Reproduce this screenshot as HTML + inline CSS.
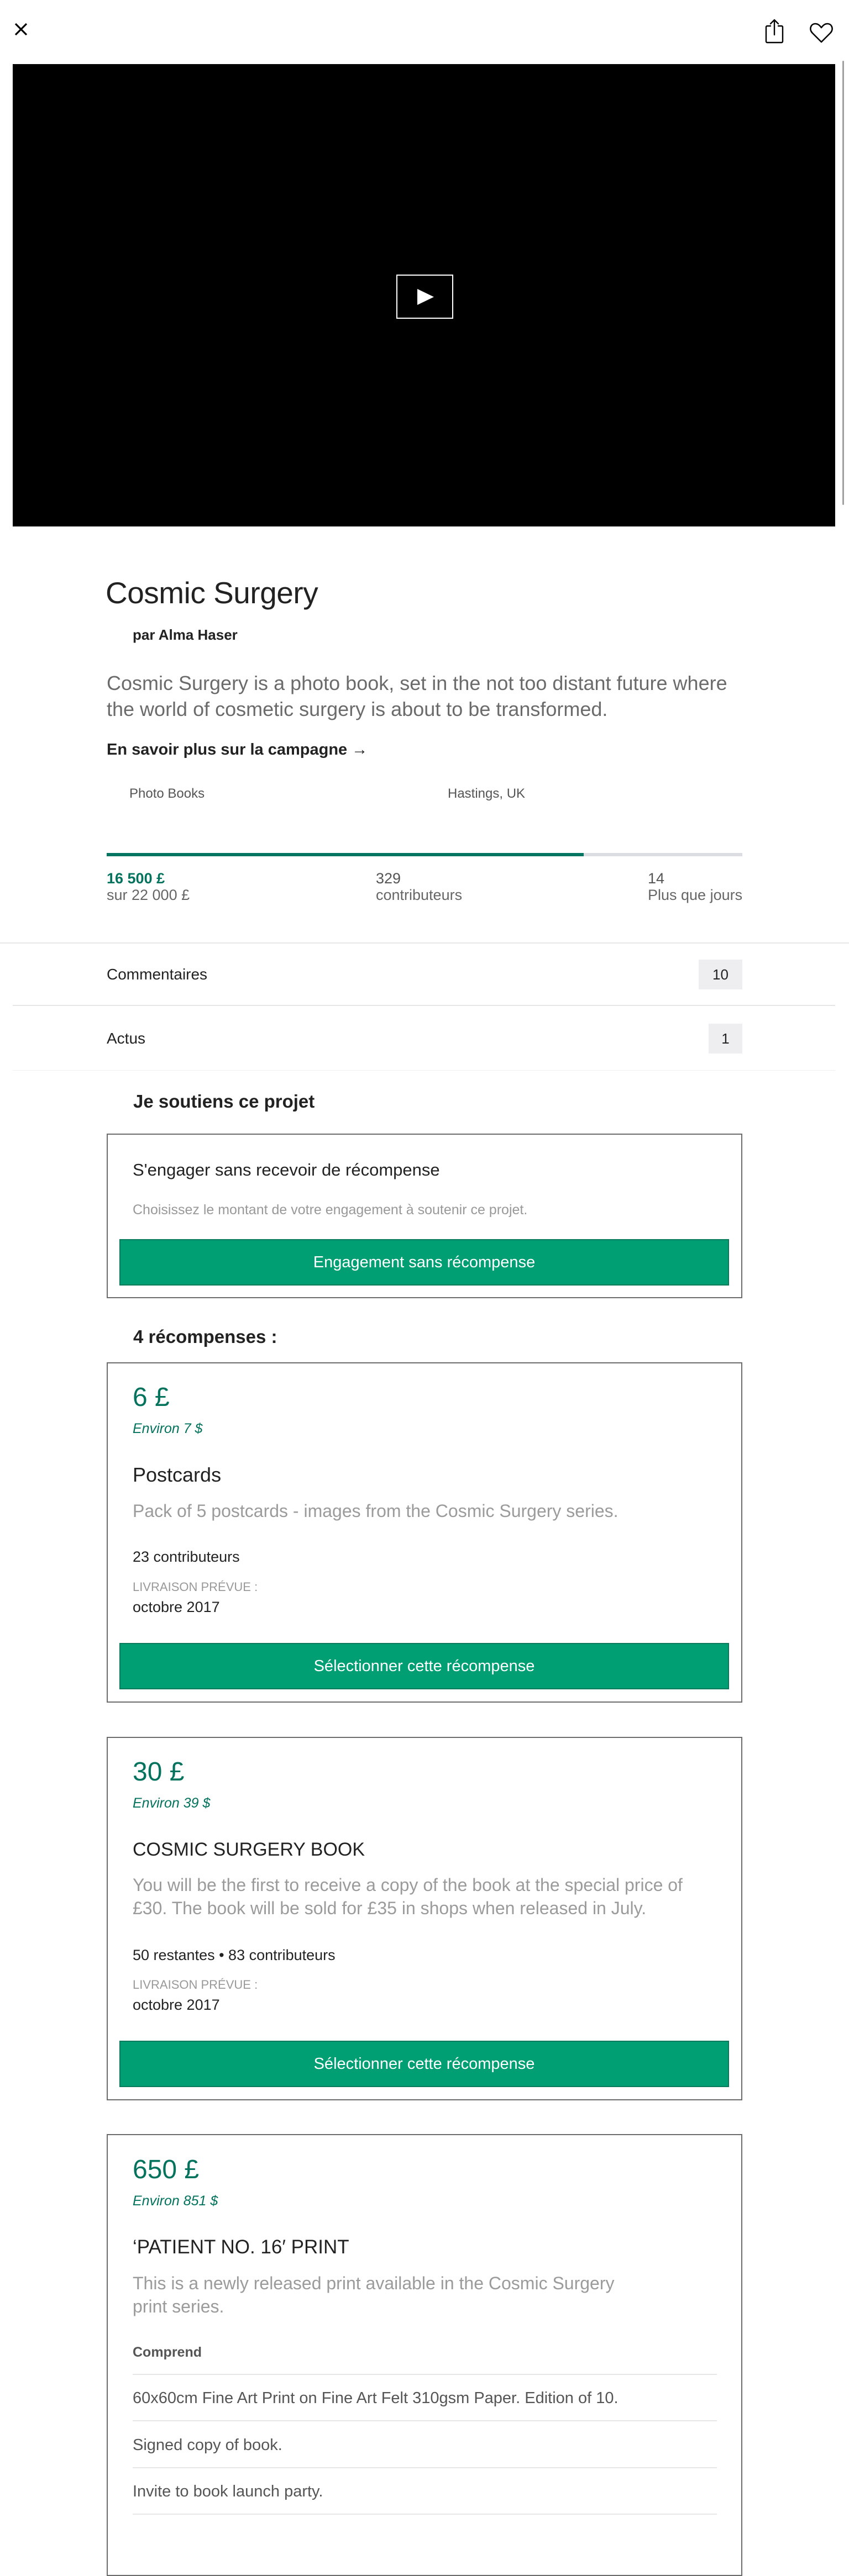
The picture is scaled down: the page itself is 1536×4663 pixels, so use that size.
<!DOCTYPE html>
<html><head><meta charset="utf-8"><style>
*{margin:0;padding:0;box-sizing:border-box}
body{width:1536px;height:4600px;position:relative;background:#fff;font-family:"Liberation Sans",sans-serif;color:#222;overflow:hidden}
.a{position:absolute;white-space:nowrap;line-height:40px;height:40px}
.hr{position:absolute;height:2px;background:#e6e6e6}
.box{position:absolute;left:193px;width:1150px;border:2px solid #6b6b6b}
.btn{position:absolute;left:216px;width:1103px;height:84px;background:#009e73;border:2px solid #067a5a;color:#fff;font-size:29px;line-height:80px;text-align:center}
.g{color:#04735d}
.badge{position:absolute;background:#eeeef1;font-size:26px;text-align:center;line-height:54px;height:54px}
</style></head><body>

<svg style="position:absolute;left:24px;top:39px" width="28" height="28" viewBox="0 0 28 28"><path d="M4 4L24 24M24 4L4 24" stroke="#000" stroke-width="3.2"/></svg>
<svg style="position:absolute;left:1382px;top:32px" width="40" height="48" viewBox="0 0 40 48"><path d="M12 15H6a2 2 0 0 0-2 2v26a2 2 0 0 0 2 2h26a2 2 0 0 0 2-2V17a2 2 0 0 0-2-2h-6M19 4v27M12 11l7-7 7 7" fill="none" stroke="#000" stroke-width="2.4" stroke-linecap="round" stroke-linejoin="round"/></svg>
<svg style="position:absolute;left:1462px;top:40px" width="48" height="40" viewBox="0 0 48 40"><path d="M24 36L8 20C1 13 5 3 13 3c5 0 8 3 11 7 3-4 6-7 11-7 8 0 12 10 5 17z" fill="none" stroke="#000" stroke-width="2.6" stroke-linejoin="round"/></svg>

<div style="position:absolute;left:23px;top:116px;width:1488px;height:837px;background:#000"></div>
<div style="position:absolute;left:1524px;top:110px;width:3px;height:804px;background:#a0a0a0;border-radius:2px"></div>
<div style="position:absolute;left:717px;top:497px;width:103px;height:80px;border:2px solid #fff"></div>
<svg style="position:absolute;left:754px;top:522px" width="32" height="31" viewBox="0 0 32 31"><path d="M1 1L31 15.5L1 30Z" fill="#fff"/></svg>

<div class="a" style="left:191px;top:1043px;font-size:55px;line-height:60px;height:60px;letter-spacing:-0.5px">Cosmic Surgery</div>
<div class="a" style="left:240px;top:1134px;font-size:26px;line-height:30px;font-weight:bold">par Alma Haser</div>
<div class="a" style="left:193px;top:1213px;font-size:36px;line-height:47px;height:94px;color:#6b6b6b">Cosmic Surgery is a photo book, set in the not too distant future where<br>the world of cosmetic surgery is about to be transformed.</div>
<div class="a" style="left:193px;top:1340px;font-size:29px;line-height:34px;font-weight:bold">En savoir plus sur la campagne →</div>
<div class="a" style="left:234px;top:1424px;font-size:24px;line-height:26px;color:#555">Photo Books</div>
<div class="a" style="left:810px;top:1424px;font-size:24px;line-height:26px;color:#555">Hastings, UK</div>

<div style="position:absolute;left:193px;top:1544px;width:1150px;height:6px;background:#dcdde3"></div>
<div style="position:absolute;left:193px;top:1544px;width:863px;height:6px;background:#037560"></div>
<div class="a g" style="left:193px;top:1574px;font-size:27px;line-height:32px;font-weight:bold">16 500 £</div>
<div class="a" style="left:193px;top:1604px;font-size:27px;line-height:32px;color:#666">sur 22 000 £</div>
<div class="a" style="left:680px;top:1574px;font-size:27px;line-height:32px;color:#555">329</div>
<div class="a" style="left:680px;top:1604px;font-size:27px;line-height:32px;color:#666">contributeurs</div>
<div class="a" style="left:1172px;top:1574px;font-size:27px;line-height:32px;color:#555">14</div>
<div class="a" style="left:1172px;top:1604px;font-size:27px;line-height:32px;color:#666">Plus que jours</div>

<div class="hr" style="left:0;top:1706px;width:1536px"></div>
<div class="a" style="left:193px;top:1748px;font-size:28px;line-height:32px">Commentaires</div>
<div class="badge" style="left:1264px;top:1737px;width:79px">10</div>
<div class="hr" style="left:23px;top:1819px;width:1488px"></div>
<div class="a" style="left:193px;top:1864px;font-size:28px;line-height:32px">Actus</div>
<div class="badge" style="left:1282px;top:1853px;width:61px">1</div>
<div class="hr" style="left:23px;top:1937px;width:1488px;height:1px;background:#efefef"></div>

<div class="a" style="left:241px;top:1976px;font-size:33px;line-height:36px;font-weight:bold">Je soutiens ce projet</div>
<div class="box" style="top:2052px;height:298px"></div>
<div class="a" style="left:240px;top:2100px;font-size:31px;line-height:36px">S'engager sans recevoir de récompense</div>
<div class="a" style="left:240px;top:2176px;font-size:25px;line-height:28px;color:#999">Choisissez le montant de votre engagement à soutenir ce projet.</div>
<div class="btn" style="top:2243px">Engagement sans récompense</div>

<div class="a" style="left:241px;top:2402px;font-size:33px;line-height:36px;font-weight:bold">4 récompenses :</div>

<!-- box 1 -->
<div class="box" style="top:2466px;height:616px"></div>
<div class="a g" style="left:240px;top:2502px;font-size:48px;line-height:56px;height:56px">6 £</div>
<div class="a g" style="left:240px;top:2572px;font-size:25px;line-height:28px;font-style:italic">Environ 7 $</div>
<div class="a" style="left:240px;top:2650px;font-size:36px;line-height:40px">Postcards</div>
<div class="a" style="left:240px;top:2714px;font-size:32px;line-height:42px;color:#9b9b9b">Pack of 5 postcards - images from the Cosmic Surgery series.</div>
<div class="a" style="left:240px;top:2804px;font-size:27px;line-height:28px">23 contributeurs</div>
<div class="a" style="left:240px;top:2861px;font-size:22px;line-height:24px;color:#999">LIVRAISON PRÉVUE :</div>
<div class="a" style="left:240px;top:2895px;font-size:27px;line-height:28px">octobre 2017</div>
<div class="btn" style="top:2974px">Sélectionner cette récompense</div>

<!-- box 2 -->
<div class="box" style="top:3144px;height:658px"></div>
<div class="a g" style="left:240px;top:3180px;font-size:48px;line-height:56px;height:56px">30 £</div>
<div class="a g" style="left:240px;top:3250px;font-size:25px;line-height:28px;font-style:italic">Environ 39 $</div>
<div class="a" style="left:240px;top:3328px;font-size:34px;line-height:40px">COSMIC SURGERY BOOK</div>
<div class="a" style="left:240px;top:3391px;font-size:32px;line-height:42px;height:84px;color:#9b9b9b">You will be the first to receive a copy of the book at the special price of<br>£30. The book will be sold for £35 in shops when released in July.</div>
<div class="a" style="left:240px;top:3525px;font-size:27px;line-height:28px">50 restantes • 83 contributeurs</div>
<div class="a" style="left:240px;top:3581px;font-size:22px;line-height:24px;color:#999">LIVRAISON PRÉVUE :</div>
<div class="a" style="left:240px;top:3615px;font-size:27px;line-height:28px">octobre 2017</div>
<div class="btn" style="top:3694px">Sélectionner cette récompense</div>

<!-- box 3 -->
<div class="box" style="top:3863px;height:800px"></div>
<div class="a g" style="left:240px;top:3900px;font-size:48px;line-height:56px;height:56px">650 £</div>
<div class="a g" style="left:240px;top:3970px;font-size:25px;line-height:28px;font-style:italic">Environ 851 $</div>
<div class="a" style="left:240px;top:4048px;font-size:35px;line-height:40px">‘PATIENT NO. 16′ PRINT</div>
<div class="a" style="left:240px;top:4112px;font-size:32px;line-height:42px;height:84px;color:#9b9b9b">This is a newly released print available in the Cosmic Surgery<br>print series.</div>
<div class="a" style="left:240px;top:4244px;font-size:25px;line-height:28px;font-weight:bold;color:#555">Comprend</div>
<div class="hr" style="left:240px;top:4297px;width:1057px"></div>
<div class="a" style="left:240px;top:4327px;font-size:29px;line-height:28px;color:#555">60x60cm Fine Art Print on Fine Art Felt 310gsm Paper. Edition of 10.</div>
<div class="hr" style="left:240px;top:4381px;width:1057px"></div>
<div class="a" style="left:240px;top:4412px;font-size:29px;line-height:28px;color:#555">Signed copy of book.</div>
<div class="hr" style="left:240px;top:4466px;width:1057px"></div>
<div class="a" style="left:240px;top:4496px;font-size:29px;line-height:28px;color:#555">Invite to book launch party.</div>
<div class="hr" style="left:240px;top:4550px;width:1057px"></div>
</body></html>
